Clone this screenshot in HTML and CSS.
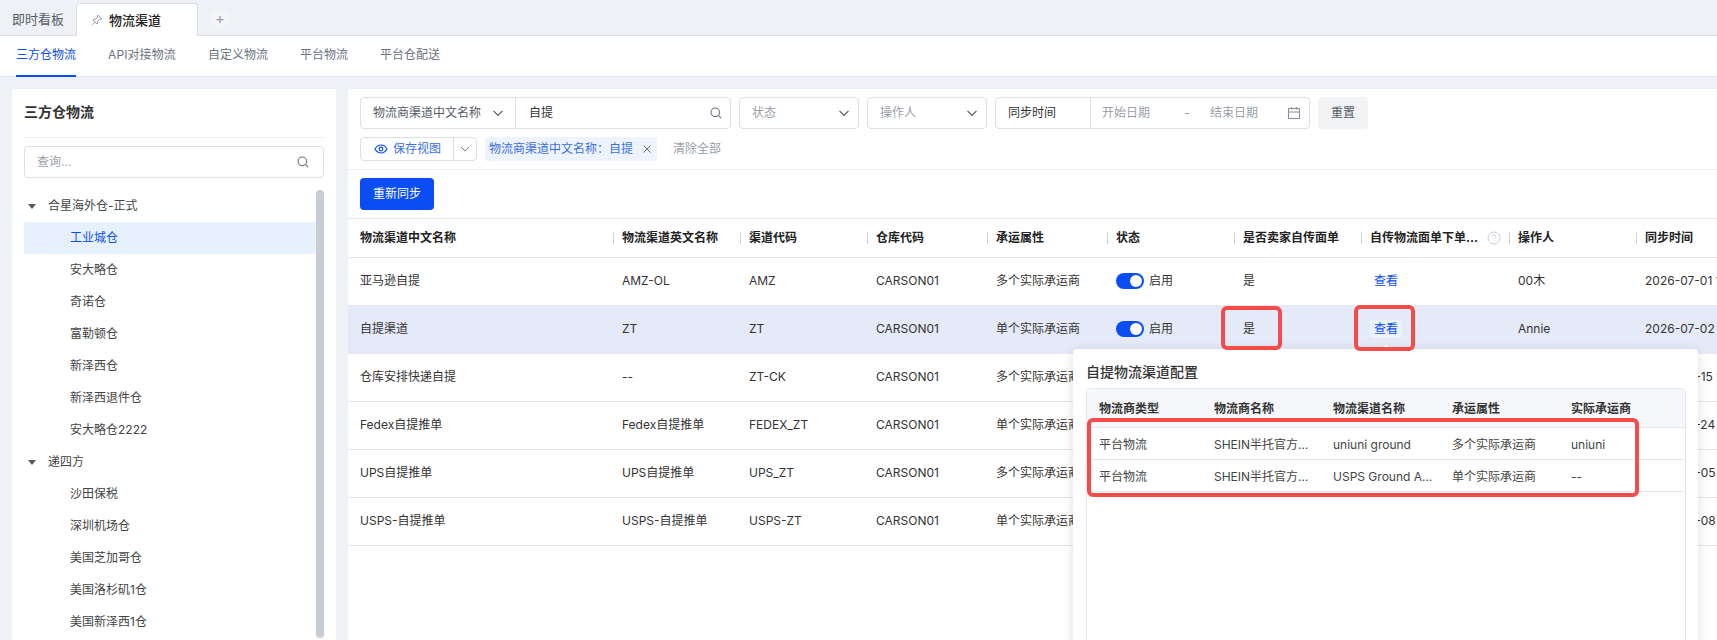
FILE: index.html
```html
<!DOCTYPE html>
<html lang="zh-CN">
<head>
  <meta charset="UTF-8" />
  <title>物流渠道</title>
  <link rel="stylesheet" href="styles.css">
</head>
<body>
  <div id="app">
    <!-- Top tabs -->
    <div class="tabs">
      <span class="tab">即时看板</span>
      <span class="tab tab-active">
        <svg class="pin" width="12" height="12" viewBox="0 0 12 12" fill="none" stroke="#8a919c" stroke-width="1"><path d="M7 1.2 10.8 5 9.8 5.6 8.6 5.4 6.6 7.6 6.6 9.2 5.8 10 2 6.2 2.8 5.4 4.4 5.4 6.6 3.4 6.4 2.2Z"/><path d="M3.6 8.4 1.2 10.8"/></svg>
        物流渠道
      </span>
      <span class="tab-add">+</span>
    </div>

    <!-- Sub nav -->
    <div class="subnav">
      <a class="subnav-item active">三方仓物流</a>
      <a class="subnav-item">API对接物流</a>
      <a class="subnav-item">自定义物流</a>
      <a class="subnav-item">平台物流</a>
      <a class="subnav-item">平台仓配送</a>
    </div>

    <div class="main">
      <!-- Warehouse tree -->
      <div class="side">
        <div class="side-title">三方仓物流</div>
        <div class="side-search">
          <span>查询...</span>
          <svg class="icon-search" width="12" height="12" viewBox="0 0 14 14" fill="none" stroke="#6b7280" stroke-width="1.3"><circle cx="6.2" cy="6.2" r="5"/><path d="M9.8 9.8 13 13"/></svg>
        </div>
        <div class="tree">
          <div class="tree-group"><i class="caret"></i>合星海外仓-正式</div>
          <div class="tree-item selected">工业城仓</div>
          <div class="tree-item">安大略仓</div>
          <div class="tree-item">奇诺仓</div>
          <div class="tree-item">富勒顿仓</div>
          <div class="tree-item">新泽西仓</div>
          <div class="tree-item">新泽西退件仓</div>
          <div class="tree-item">安大略仓2222</div>
          <div class="tree-group"><i class="caret"></i>递四方</div>
          <div class="tree-item">沙田保税</div>
          <div class="tree-item">深圳机场仓</div>
          <div class="tree-item">美国芝加哥仓</div>
          <div class="tree-item">美国洛杉矶1仓</div>
          <div class="tree-item">美国新泽西1仓</div>
        </div>
        <div class="side-scroll"></div>
      </div>

      <!-- Channel list -->
      <div class="content">
        <div class="filters">
          <div class="field field-search">
            <div class="field-select">物流商渠道中文名称
              <svg class="chev" width="12" height="12" viewBox="0 0 12 12" fill="none" stroke="#555b66" stroke-width="1.2"><path d="M1.5 3.8 6 8.3 10.5 3.8"/></svg>
            </div>
            <div class="field-input">自提
              <svg width="12" height="12" viewBox="0 0 14 14" fill="none" stroke="#6b7280" stroke-width="1.3"><circle cx="6.2" cy="6.2" r="5"/><path d="M9.8 9.8 13 13"/></svg>
            </div>
          </div>
          <div class="field field-drop">状态
            <svg width="12" height="12" viewBox="0 0 12 12" fill="none" stroke="#555b66" stroke-width="1.2"><path d="M1.5 3.8 6 8.3 10.5 3.8"/></svg>
          </div>
          <div class="field field-drop">操作人
            <svg width="12" height="12" viewBox="0 0 12 12" fill="none" stroke="#555b66" stroke-width="1.2"><path d="M1.5 3.8 6 8.3 10.5 3.8"/></svg>
          </div>
          <div class="field field-date">
            <div class="date-label">同步时间</div>
            <div class="date-range">
              <span>开始日期</span><span class="dash">-</span><span>结束日期</span>
              <svg width="14" height="14" viewBox="0 0 14 14" fill="none" stroke="#8a919c" stroke-width="1.1"><rect x="1.5" y="2.5" width="11" height="10"/><path d="M1.5 6H12.5M4.5 1V3.5M9.5 1V3.5"/></svg>
            </div>
          </div>
          <button class="btn-reset">重置</button>
        </div>

        <div class="views">
          <div class="save-view">
            <span class="save-main">
              <svg width="14" height="14" viewBox="0 0 14 14" fill="none" stroke="#0a4df5" stroke-width="1.2"><path d="M1 7C2.5 4.4 4.6 3 7 3s4.5 1.4 6 4c-1.500 2.600-3.600 4-6 4S2.500 9.600 1 7Z"/><circle cx="7" cy="7" r="1.800"/></svg>
              保存视图
            </span>
            <span class="save-more">
              <svg width="10" height="10" viewBox="0 0 12 12" fill="none" stroke="#6b7280" stroke-width="1.2"><path d="M1.500 3.800 6 8.300 10.500 3.800"/></svg>
            </span>
          </div>
          <div class="tag">物流商渠道中文名称：自提
            <svg width="10" height="10" viewBox="0 0 10 10" fill="none" stroke="#6b7280" stroke-width="1"><path d="M1.500 1.500 8.500 8.500M8.500 1.500 1.500 8.500"/></svg>
          </div>
          <span class="clear">清除全部</span>
        </div>

        <div class="actions">
          <button class="btn-primary">重新同步</button>
        </div>

        <div class="table-wrap">
          <table class="grid">
            <colgroup>
              <col class="w262"><col class="w127"><col class="w127"><col class="w120"><col class="w120"><col class="w127"><col class="w127"><col class="w148"><col class="w127"><col class="w200">
            </colgroup>
            <thead>
              <tr>
                <th>物流渠道中文名称</th>
                <th>物流渠道英文名称</th>
                <th>渠道代码</th>
                <th>仓库代码</th>
                <th>承运属性</th>
                <th>状态</th>
                <th>是否卖家自传面单</th>
                <th>
                  <div class="th-help">
                    <span class="th-clip">自传物流面单下单方式</span>
                    <svg width="14" height="14" viewBox="0 0 14 14" fill="none" stroke="#c9cdd6"><circle cx="7" cy="7" r="6"/><path d="M5.300 5.500C5.300 4.500 6 4 7 4s1.700.6 1.700 1.500C8.700 6.700 7 6.700 7 8.200M7 9.400V10.400"/></svg>
                  </div>
                </th>
                <th>操作人</th>
                <th>同步时间</th>
              </tr>
            </thead>
            <tbody>
              <tr>
                <td>亚马逊自提</td><td>AMZ-OL</td><td>AMZ</td><td>CARSON01</td><td>多个实际承运商</td>
                <td><span class="switch"><i></i></span>启用</td>
                <td>是</td><td><a class="link">查看</a></td><td>00木</td><td>2026-07-01 10:21:36</td>
              </tr>
              <tr class="current">
                <td>自提渠道</td><td>ZT</td><td>ZT</td><td>CARSON01</td><td>单个实际承运商</td>
                <td><span class="switch"><i></i></span>启用</td>
                <td>是</td><td><a class="link link-on">查看</a></td><td>Annie</td><td>2026-07-02 09:15:02</td>
              </tr>
              <tr>
                <td>仓库安排快递自提</td><td>--</td><td>ZT-CK</td><td>CARSON01</td><td>多个实际承运商</td>
                <td><span class="switch"><i></i></span>启用</td>
                <td>是</td><td><a class="link">查看</a></td><td>00木</td><td>2026-06-15 11:40:12</td>
              </tr>
              <tr>
                <td>Fedex自提推单</td><td>Fedex自提推单</td><td>FEDEX_ZT</td><td>CARSON01</td><td>单个实际承运商</td>
                <td><span class="switch"><i></i></span>启用</td>
                <td>是</td><td><a class="link">查看</a></td><td>00木</td><td>2026-06-24 16:08:44</td>
              </tr>
              <tr>
                <td>UPS自提推单</td><td>UPS自提推单</td><td>UPS_ZT</td><td>CARSON01</td><td>多个实际承运商</td>
                <td><span class="switch"><i></i></span>启用</td>
                <td>是</td><td><a class="link">查看</a></td><td>00木</td><td>2026-06-05 14:22:10</td>
              </tr>
              <tr>
                <td>USPS-自提推单</td><td>USPS-自提推单</td><td>USPS-ZT</td><td>CARSON01</td><td>单个实际承运商</td>
                <td><span class="switch"><i></i></span>启用</td>
                <td>是</td><td><a class="link">查看</a></td><td>00木</td><td>2026-06-08 08:30:51</td>
              </tr>
            </tbody>
          </table>
        </div>
      </div>
    </div>

    <!-- Popover opened from the 查看 link -->
    <div class="popover">
      <i class="popover-arrow"></i>
      <div class="popover-title">自提物流渠道配置</div>
      <div class="popover-table">
        <table class="mini">
          <colgroup>
            <col class="w115"><col class="w119"><col class="w119"><col class="w119"><col>
          </colgroup>
          <thead>
            <tr><th>物流商类型</th><th>物流商名称</th><th>物流渠道名称</th><th>承运属性</th><th>实际承运商</th></tr>
          </thead>
          <tbody>
            <tr><td>平台物流</td><td>SHEIN半托官方物流服务</td><td>uniuni ground</td><td>多个实际承运商</td><td>uniuni</td></tr>
            <tr><td>平台物流</td><td>SHEIN半托官方物流服务</td><td>USPS Ground Advantage</td><td>单个实际承运商</td><td>--</td></tr>
          </tbody>
        </table>
      </div>
    </div>

    <!-- Red review marks drawn over the screenshot -->
    <div class="mark mark-yes"></div>
    <div class="mark mark-view"></div>
    <div class="mark mark-rows"></div>
  </div>
</body>
</html>
```

FILE: styles.css
```css
* {
  box-sizing: border-box;
}

body, html {
  margin: 0;
  padding: 0;
  height: 640px;
  overflow: hidden;
  font-family: Inter, "Noto Sans CJK SC", sans-serif;
  font-size: 12px;
  line-height: 16px;
  color: #333;
  background-color: #eef1f5;
}

#app {
  position: relative;
  width: 1717px;
  height: 640px;
  overflow: hidden;
}

/* top tabs */
.tabs {
  display: flex;
  align-items: flex-end;
  height: 36px;
  padding-left: 12px;
  border-bottom: 1px solid #dcdfe6;
}

.tab {
  display: flex;
  align-items: center;
  height: 32px;
  font-size: 13px;
  color: #555b66;
}

.tab-active {
  width: 122px;
  height: 33px;
  margin-left: 12px;
  margin-bottom: -1px;
  padding-left: 14px;
  background-color: #fff;
  border: 1px solid #dcdfe6;
  border-bottom: none;
  border-radius: 4px 4px 0 0;
  color: #222;
  font-weight: 500;
}

.pin {
  margin-right: 6px;
}

.tab-add {
  width: 20px;
  height: 20px;
  margin: 0 0 6px 12px;
  border-radius: 50%;
  background-color: #f2f4f7;
  color: #9aa0a8;
  font-size: 15px;
  line-height: 19px;
  text-align: center;
}

/* sub nav */
.subnav {
  display: flex;
  gap: 32px;
  height: 41px;
  padding-left: 16px;
  background-color: #fff;
  border-bottom: 1px solid #e3e6ec;
}

.subnav-item {
  height: 41px;
  line-height: 38px;
  color: #6b7280;
}

.subnav-item:nth-child(2) {
  letter-spacing: 0.1px;
}

.subnav-item.active {
  color: #0a4df5;
  border-bottom: 2px solid #0a4df5;
}

.main {
  display: flex;
  gap: 12px;
  height: 563px;
  padding: 12px 0 0 12px;
}

/* tree */
.side {
  position: relative;
  flex: 0 0 324px;
  padding: 0 12px;
  background-color: #fff;
  overflow: hidden;
}

.side-title {
  height: 49px;
  line-height: 45px;
  font-size: 14px;
  font-weight: 700;
  color: #333;
  border-bottom: 1px solid #eceef2;
}

.side-search {
  display: flex;
  align-items: center;
  justify-content: space-between;
  height: 32px;
  margin-top: 8px;
  padding: 0 14px 0 12px;
  border: 1px solid #dcdfe6;
  border-radius: 4px;
  color: #9aa0a8;
}

.tree {
  margin-top: 12px;
  margin-right: 8px;
}

.tree-group, .tree-item {
  height: 32px;
  line-height: 32px;
  color: #444;
}

.tree-group {
  display: flex;
  align-items: center;
  padding-left: 4px;
}

.caret {
  width: 0;
  height: 0;
  margin-right: 12px;
  border-left: 4px solid transparent;
  border-right: 4px solid transparent;
  border-top: 5px solid #555b66;
}

.tree-item {
  padding-left: 46px;
}

.tree-item.selected {
  background-color: #e7f1fd;
  color: #0a4df5;
}

.side-scroll {
  position: absolute;
  top: 101px;
  right: 12px;
  width: 8px;
  height: 448px;
  border-radius: 4px;
  background-color: #c8cdd5;
}

/* filters */
.content {
  flex: 1;
  min-width: 0;
  padding-top: 8px;
  background-color: #fff;
  overflow: hidden;
}

.filters {
  display: flex;
  gap: 8px;
  height: 32px;
  padding-left: 12px;
}

.field {
  display: flex;
  align-items: center;
  height: 32px;
  border: 1px solid #dcdfe6;
  border-radius: 4px;
}

.field-search {
  width: 371px;
}

.field-select {
  display: flex;
  align-items: center;
  justify-content: space-between;
  width: 155px;
  height: 100%;
  padding: 0 11px 0 12px;
  border-right: 1px solid #dcdfe6;
  color: #555b66;
}

.field-input {
  display: flex;
  align-items: center;
  justify-content: space-between;
  flex: 1;
  padding: 0 8px 0 13px;
}

.field-drop {
  justify-content: space-between;
  width: 120px;
  padding: 0 8px 0 12px;
  color: #9aa0a8;
}

.field-date {
  width: 315px;
}

.date-label {
  display: flex;
  align-items: center;
  width: 95px;
  height: 100%;
  padding-left: 12px;
  border-right: 1px solid #dcdfe6;
}

.date-range {
  display: flex;
  align-items: center;
  flex: 1;
  padding: 0 8px 0 11px;
  color: #9aa0a8;
}

.dash {
  width: 60px;
  padding-left: 14px;
  text-align: center;
}

.date-range svg {
  margin-left: auto;
}

.btn-reset {
  width: 50px;
  height: 32px;
  padding: 0;
  border: none;
  border-radius: 4px;
  background-color: #f2f3f5;
  color: #555b66;
  font: inherit;
}

.views {
  display: flex;
  align-items: center;
  height: 24px;
  margin-top: 8px;
  padding-left: 12px;
}

.save-view {
  display: flex;
  width: 117px;
  height: 24px;
  border: 1px solid #dcdfe6;
  border-radius: 4px;
  color: #3b6fe8;
}

.save-main {
  display: flex;
  align-items: center;
  gap: 5px;
  width: 93px;
  padding-left: 13px;
  border-right: 1px solid #dcdfe6;
}

.save-more {
  display: flex;
  align-items: center;
  justify-content: center;
  flex: 1;
}

.tag {
  display: flex;
  align-items: center;
  justify-content: space-between;
  width: 172px;
  height: 24px;
  margin-left: 8px;
  padding: 0 5px 0 4px;
  background-color: #eef4ff;
  border-radius: 2px;
  color: #3b6fe8;
}

.clear {
  margin-left: 16px;
  color: #9aa0a8;
}

.actions {
  height: 49px;
  margin-top: 8px;
  padding: 8px 0 0 12px;
  border-top: 1px solid #eceef2;
}

.btn-primary {
  width: 74px;
  height: 32px;
  padding: 0;
  border: none;
  border-radius: 4px;
  background-color: #0a4df5;
  color: #fff;
  font: inherit;
}

/* main table */
.table-wrap {
  overflow: hidden;
}

.grid {
  width: 1485px;
  table-layout: fixed;
  border-collapse: separate;
  border-spacing: 0;
}

.w262 { width: 262px; }
.w127 { width: 127px; }
.w120 { width: 120px; }
.w148 { width: 148px; }
.w200 { width: 200px; }
.w115 { width: 115px; }
.w119 { width: 119px; }

.grid th {
  position: relative;
  height: 40px;
  padding: 0 12px 1px;
  border-top: 1px solid #e3e6ec;
  border-bottom: 1px solid #e3e6ec;
  color: #222;
  font-weight: 700;
  text-align: left;
  white-space: nowrap;
}

.grid th + th::before {
  content: "";
  position: absolute;
  top: 13px;
  left: 3px;
  width: 1px;
  height: 12px;
  background-color: #cdd0d6;
}

.grid td {
  height: 48px;
  padding: 0 12px 1px;
  border-bottom: 1px solid #e6e8ec;
  white-space: nowrap;
  overflow: hidden;
}

.grid tr.current td {
  background-color: #e5eaf8;
}

.th-help {
  display: flex;
  align-items: center;
  gap: 7px;
}

.th-clip {
  flex: none;
  width: 110px;
  overflow: hidden;
  text-overflow: ellipsis;
}

.th-help svg {
  flex: none;
}

.switch {
  display: inline-block;
  position: relative;
  width: 28px;
  height: 16px;
  margin-right: 5px;
  border-radius: 8px;
  background-color: #0a4df5;
  vertical-align: -4px;
}

.switch i {
  position: absolute;
  top: 2px;
  right: 2px;
  width: 12px;
  height: 12px;
  border-radius: 50%;
  background-color: #fff;
}

.link {
  display: inline-block;
  height: 18px;
  padding: 0 4px;
  line-height: 18px;
  border-radius: 2px;
  color: #0a4df5;
}

.link-on {
  background-color: #eaf2fe;
}

/* popover */
.popover {
  position: absolute;
  top: 349px;
  left: 1073px;
  width: 625px;
  height: 320px;
  padding: 12px 12px 0 13px;
  background-color: #fff;
  border-radius: 4px;
  box-shadow: 0 2px 12px rgba(0, 0, 0, 0.14);
}

.popover-arrow {
  position: absolute;
  top: -3px;
  left: 310px;
  width: 6px;
  height: 6px;
  background-color: #fff;
  transform: rotate(45deg);
}

.popover-title {
  height: 27px;
  line-height: 22px;
  font-size: 14px;
  font-weight: 500;
  color: #333;
}

.popover-table {
  height: 300px;
  border: 1px solid #e3e6ec;
  border-radius: 4px;
  overflow: hidden;
}

.mini {
  width: 100%;
  table-layout: fixed;
  border-collapse: separate;
  border-spacing: 0;
}

.mini th {
  height: 39px;
  padding: 2px 12px 0;
  background-color: #f5f7fa;
  border-bottom: 1px solid #e3e6ec;
  color: #333;
  font-weight: 700;
  text-align: left;
}

.mini td {
  height: 32px;
  padding: 2px 6px 0 12px;
  border-bottom: 1px solid #e3e6ec;
  color: #444;
  white-space: nowrap;
  overflow: hidden;
  text-overflow: ellipsis;
}

.mini td:nth-child(2) {
  padding-right: 12px;
}

/* red marks */
.mark {
  position: absolute;
  border: 4px solid #f44c4a;
  border-radius: 6px;
}

.mark-yes {
  top: 306px;
  left: 1221px;
  width: 61px;
  height: 44px;
}

.mark-view {
  top: 305px;
  left: 1354px;
  width: 61px;
  height: 46px;
}

.mark-rows {
  top: 418px;
  left: 1087px;
  width: 552px;
  height: 79px;
}
```
